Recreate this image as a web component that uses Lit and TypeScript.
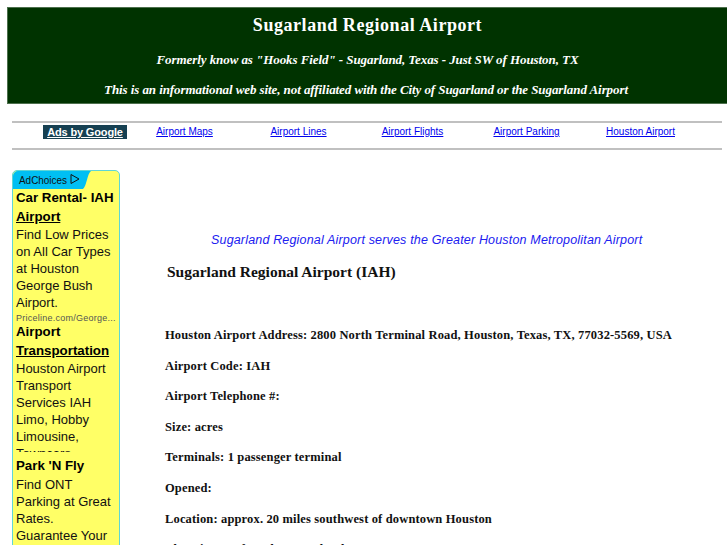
import { LitElement, html, css } from "lit";
import { customElement } from "lit/decorators.js";

const nav = ["Airport Maps", "Airport Lines", "Airport Flights", "Airport Parking", "Houston Airport"];
const ads = [
  { p: "Car Rental- IAH", l: "Airport", d: "Find Low Prices on All Car Types at Houston George Bush Airport.", u: "Priceline.com/George...", h: 134 },
  { p: "Airport", l: "Transportation", d: "Houston Airport Transport Services IAH Limo, Hobby Limousine, Towncars Available", u: "", h: 134 },
  { p: "Park 'N Fly", l: "", d: "Find ONT Parking at Great Rates. Guarantee Your Spot Today", u: "", h: 135 },
];
const facts = [
  "Houston Airport Address: 2800 North Terminal Road, Houston, Texas, TX, 77032-5569, USA",
  "Airport Code: IAH",
  "Airport Telephone #:",
  "Size: acres",
  "Terminals: 1 passenger terminal",
  "Opened:",
  "Location: approx. 20 miles southwest of downtown Houston",
  "Elevation: 95 feet above sea level",
];

@customElement("app-root")
export class AppRoot extends LitElement {
  static styles = css`
    :host { display: block; height: 545px; overflow: hidden; background: #fff; font-family: "Liberation Serif", serif; }
    .page { padding: 7px 0 0 7px; }
    .banner { background: #003300; border: 1px solid #4d704d; border-right: 0; height: 95px; color: #fff; text-align: center; font-weight: 700; display: flex; flex-direction: column; align-items: center; }
    .banner h1 { margin: 7px 0 0; font-size: 18px; line-height: 21px; font-weight: 700; letter-spacing: 0.55px; }
    .banner p { margin: 0; font-size: 13px; line-height: 15px; font-style: italic; letter-spacing: -0.07px; }
    .banner .a { margin-top: 16px; }
    .banner .b { margin: 15px 3px 0 0; letter-spacing: -0.08px; }
    .nav { margin: 17px 5px 0 5px; border-top: 2px solid #c0c0c0; border-bottom: 2px solid #c0c0c0; display: flex; align-items: flex-start; padding-top: 2px; height: 23px; font-family: "Liberation Sans", sans-serif; }
    .label { margin-left: 31px; width: 84px; height: 14px; background: #164052; color: #fff; font-size: 11px; font-weight: 700; line-height: 14px; text-align: center; text-decoration: underline; flex: none; letter-spacing: -0.15px; }
    .links { display: flex; margin-left: 0.5px; }
    .links a { width: 114px; text-align: center; font-size: 10px; line-height: 14px; color: #0000ee; text-decoration: underline; }
    .main { display: flex; margin: 20px 0 0 5px; }
    .adbox { width: 106px; flex: none; border: 1px solid #5fd6d6; border-radius: 5px 5px 0 0; background: #ffff66; font-family: "Liberation Sans", sans-serif; color: #111; align-self: flex-start; }
    .tag { display: block; width: 106px; height: 18px; }
    .ad { overflow: hidden; padding: 0 3px; }
    .ad b { display: block; font-size: 13.3px; line-height: 18.5px; color: #000; }
    .ad .d { font-size: 13px; line-height: 17px; max-height: 92px; overflow: hidden; }
    .ad .url { margin-top: 2px; font-size: 9px; line-height: 11px; color: #555; white-space: nowrap; letter-spacing: 0.25px; }
    .content { flex: 1; min-width: 0; padding-left: 45px; }
    .lead { margin: 62px 0 0 46px; font: italic 12.5px/17px "Liberation Sans", sans-serif; color: #2020f0; letter-spacing: 0.17px; white-space: nowrap; }
    h2 { margin: 14px 0 0 2px; font-size: 15.5px; line-height: 18px; font-weight: 700; color: #111; }
    .facts { margin-top: 47px; }
    .facts p { margin: 0 0 15.6px 0; font-size: 12.5px; line-height: 15px; font-weight: 700; color: #111; white-space: nowrap; letter-spacing: 0.15px; }
  `;

  render() {
    return html`
      <div class="page">
        <div class="banner">
          <h1>Sugarland Regional Airport</h1>
          <p class="a">Formerly know as "Hooks Field" - Sugarland, Texas - Just SW of Houston, TX</p>
          <p class="b">This is an informational web site, not affiliated with the City of Sugarland or the Sugarland Airport</p>
        </div>
        <div class="nav">
          <span class="label">Ads by Google</span>
          <div class="links">${nav.map((n) => html`<a href="#">${n}</a>`)}</div>
        </div>
        <div class="main">
          <div class="adbox">
            <svg class="tag" viewBox="0 0 106 18">
              <path d="M0 5a5 5 0 0 1 5-5H78C74 3 74 14 70 18H0Z" fill="#00bff3"/>
              <text x="6" y="12.5" font-family="Liberation Sans" font-size="11" textLength="48" lengthAdjust="spacingAndGlyphs" fill="#111">AdChoices</text>
              <path d="M58 3.5V12.5M58 3.5 66 8 58 12.5" fill="none" stroke="#111" stroke-width="1"/>
            </svg>
            ${ads.map((a) => html`
              <div class="ad" style="height:${a.h}px">
                <b>${a.p} ${a.l ? html`<u>${a.l}</u>` : ""}</b>
                <div class="d">${a.d}</div>
                ${a.u ? html`<div class="url">${a.u}</div>` : ""}
              </div>`)}
          </div>
          <div class="content">
            <div class="lead">Sugarland Regional Airport serves the Greater Houston Metropolitan Airport</div>
            <h2>Sugarland Regional Airport (IAH)</h2>
            <div class="facts">${facts.map((f) => html`<p>${f}</p>`)}</div>
          </div>
        </div>
      </div>
    `;
  }
}
